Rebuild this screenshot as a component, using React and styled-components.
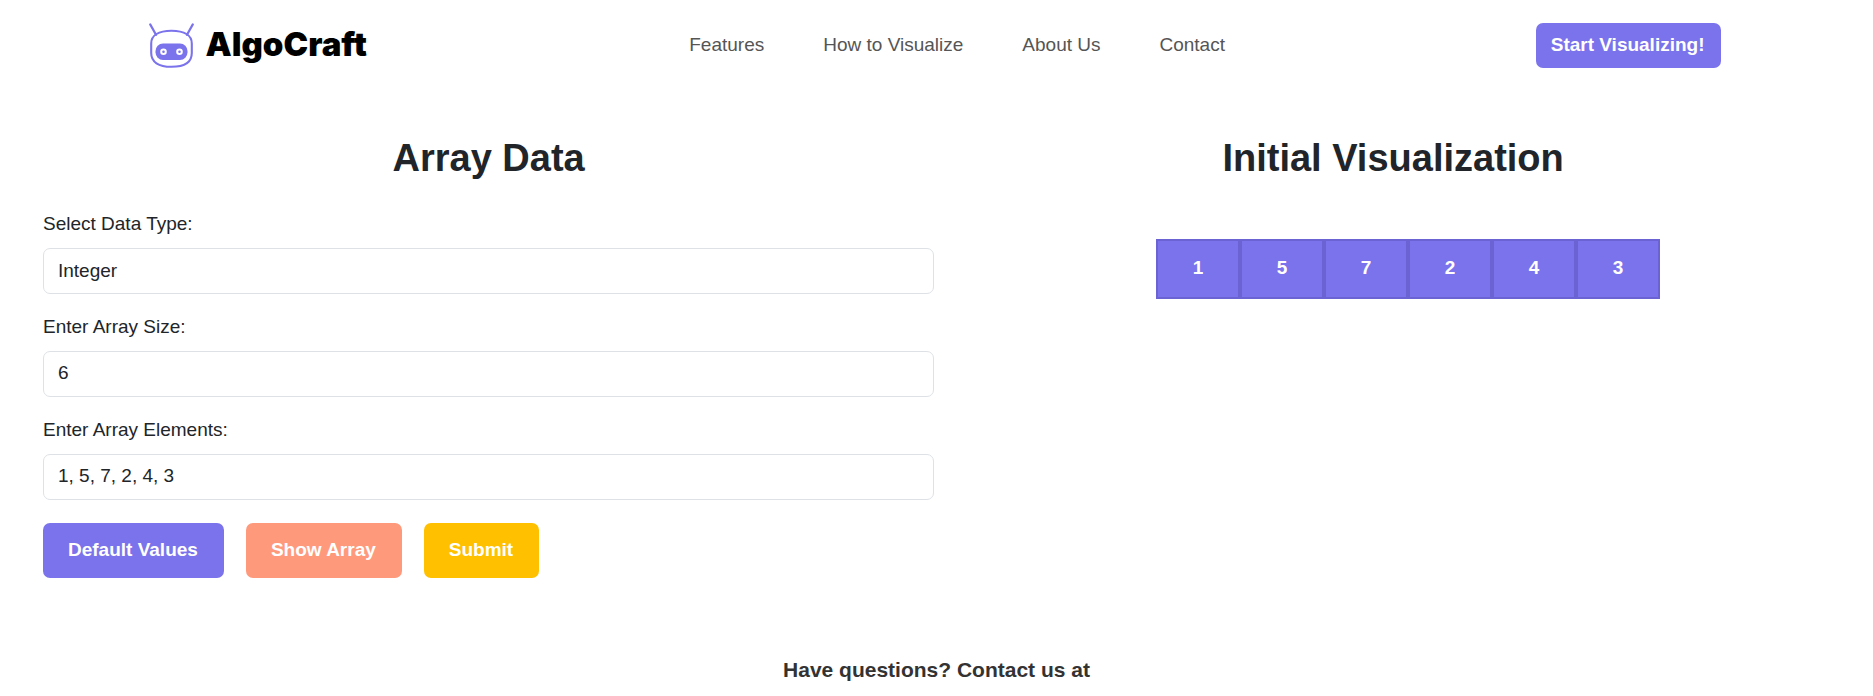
import React, { useState } from "react";
import styled, { createGlobalStyle } from "styled-components";

const PURPLE = "#7b73eb";

const GlobalStyle = createGlobalStyle`
  *, *::before, *::after { box-sizing: border-box; }
  body {
    margin: 0;
    background: #fff;
    color: #212529;
    font-family: "Liberation Sans", Arial, sans-serif;
    font-size: 19px;
    line-height: 29px;
  }
`;

const Header = styled.header`
  display: flex;
  align-items: center;
  justify-content: space-between;
  max-width: 1584px;
  margin: 0 auto;
  padding: 23px 8px 23px 4px;
`;

const Brand = styled.a`
  display: flex;
  align-items: center;
  gap: 12px;
  min-width: 230px;
  color: #000;
  font-family: Inter, "Liberation Sans", sans-serif;
  font-size: 33px;
  font-weight: 900;
  line-height: 40px;
  text-decoration: none;
`;

const BrandName = styled.span`
  padding-bottom: 4px;
`;

const Nav = styled.nav`
  display: flex;
  gap: 59px;
  padding-bottom: 2px;
`;

const NavLink = styled.a`
  color: #555;
  text-decoration: none;
`;

const Button = styled.button`
  border: 0;
  border-radius: 7px;
  padding: ${(p) => (p.$compact ? "7px 16px 9px 15px" : "12px 26px 14px 25px")};
  background: ${(p) => p.$color};
  color: #fff;
  font: inherit;
  font-weight: 700;
  cursor: pointer;
`;

const Main = styled.main`
  display: grid;
  grid-template-columns: 51fr 50fr;
  gap: 22px;
  padding: 44px 43px 76px;
`;

const Title = styled.h2`
  margin: 0 0 28px;
  font-size: 38px;
  line-height: 46px;
  font-weight: 700;
  text-align: center;
`;

const Field = styled.div`
  display: flex;
  flex-direction: column;
  gap: 10px;
  margin-bottom: 18px;
`;

const Control = styled.input`
  appearance: none;
  width: 100%;
  height: 46px;
  padding: 0 14px 2px;
  border: 1px solid #dee2e6;
  border-radius: 7px;
  background: #fff;
  color: inherit;
  font: inherit;
`;

const Actions = styled.div`
  display: flex;
  gap: 22px;
  padding-top: 5px;
`;

const ArrayRow = styled.ol`
  display: flex;
  justify-content: center;
  margin: 0;
  padding: 30px 0 0 30px;
  list-style: none;
`;

const Cell = styled.li`
  width: 84px;
  height: 60px;
  padding: 12px 0;
  border: 2px solid #6b63d4;
  background: ${PURPLE};
  color: #fff;
  font-weight: 700;
  text-align: center;
`;

const Footer = styled.footer`
  color: #333;
  font-size: 21px;
  font-weight: 700;
  line-height: 32px;
  text-align: center;
`;

function RobotIcon() {
  return (
    <svg width="45" height="45" viewBox="0 0 45 45" fill="none" aria-hidden="true">
      <path
        d="M1.2 1.4 7 11.800M43.800 1.400 38 11.800"
        stroke={PURPLE}
        strokeWidth="2.200"
        strokeLinecap="round"
      />
      <path
        d="M22.5 7.800C35.500 7.800 42.800 12.500 42.800 20.500V30C42.800 39 35.500 43.800 22.500 43.800S2.200 39 2.200 30V20.500C2.200 12.500 9.500 7.800 22.500 7.800Z"
        stroke={PURPLE}
        strokeWidth="2.100"
      />
      <rect x="6.500" y="20.500" width="32" height="16.500" rx="7.500" fill={PURPLE} />
      <circle cx="14.500" cy="28.700" r="2.300" stroke="#fff" strokeWidth="2" />
      <circle cx="30.500" cy="28.700" r="2.300" stroke="#fff" strokeWidth="2" />
    </svg>
  );
}

const LINKS = ["Features", "How to Visualize", "About Us", "Contact"];
const DEFAULTS = { type: "Integer", size: "6", elements: "1, 5, 7, 2, 4, 3" };
const parse = (text) => text.split(",").map((s) => s.trim()).filter(Boolean);

export default function App() {
  const [values, setValues] = useState(DEFAULTS);
  const [shown, setShown] = useState(parse(DEFAULTS.elements));
  const update = (key) => (e) => setValues({ ...values, [key]: e.target.value });
  const show = () => setShown(parse(values.elements));

  return (
    <>
      <GlobalStyle />
      <Header>
        <Brand href="#">
          <RobotIcon />
          <BrandName>AlgoCraft</BrandName>
        </Brand>
        <Nav>
          {LINKS.map((label) => (
            <NavLink key={label} href="#">{label}</NavLink>
          ))}
        </Nav>
        <Button type="button" $compact $color={PURPLE}>Start Visualizing!</Button>
      </Header>
      <Main>
        <section>
          <Title>Array Data</Title>
          <form onSubmit={(e) => { e.preventDefault(); show(); }}>
            <Field>
              <label htmlFor="type">Select Data Type:</label>
              <Control as="select" id="type" value={values.type} onChange={update("type")}>
                <option>Integer</option>
                <option>String</option>
              </Control>
            </Field>
            <Field>
              <label htmlFor="size">Enter Array Size:</label>
              <Control id="size" value={values.size} onChange={update("size")} />
            </Field>
            <Field>
              <label htmlFor="elements">Enter Array Elements:</label>
              <Control id="elements" value={values.elements} onChange={update("elements")} />
            </Field>
            <Actions>
              <Button type="button" $color={PURPLE} onClick={() => setValues(DEFAULTS)}>
                Default Values
              </Button>
              <Button type="button" $color="#ff997c" onClick={show}>Show Array</Button>
              <Button type="submit" $color="#ffc000">Submit</Button>
            </Actions>
          </form>
        </section>
        <section>
          <Title>Initial Visualization</Title>
          <ArrayRow>
            {shown.map((value, i) => (
              <Cell key={i}>{value}</Cell>
            ))}
          </ArrayRow>
        </section>
      </Main>
      <Footer>Have questions? Contact us at</Footer>
    </>
  );
}
